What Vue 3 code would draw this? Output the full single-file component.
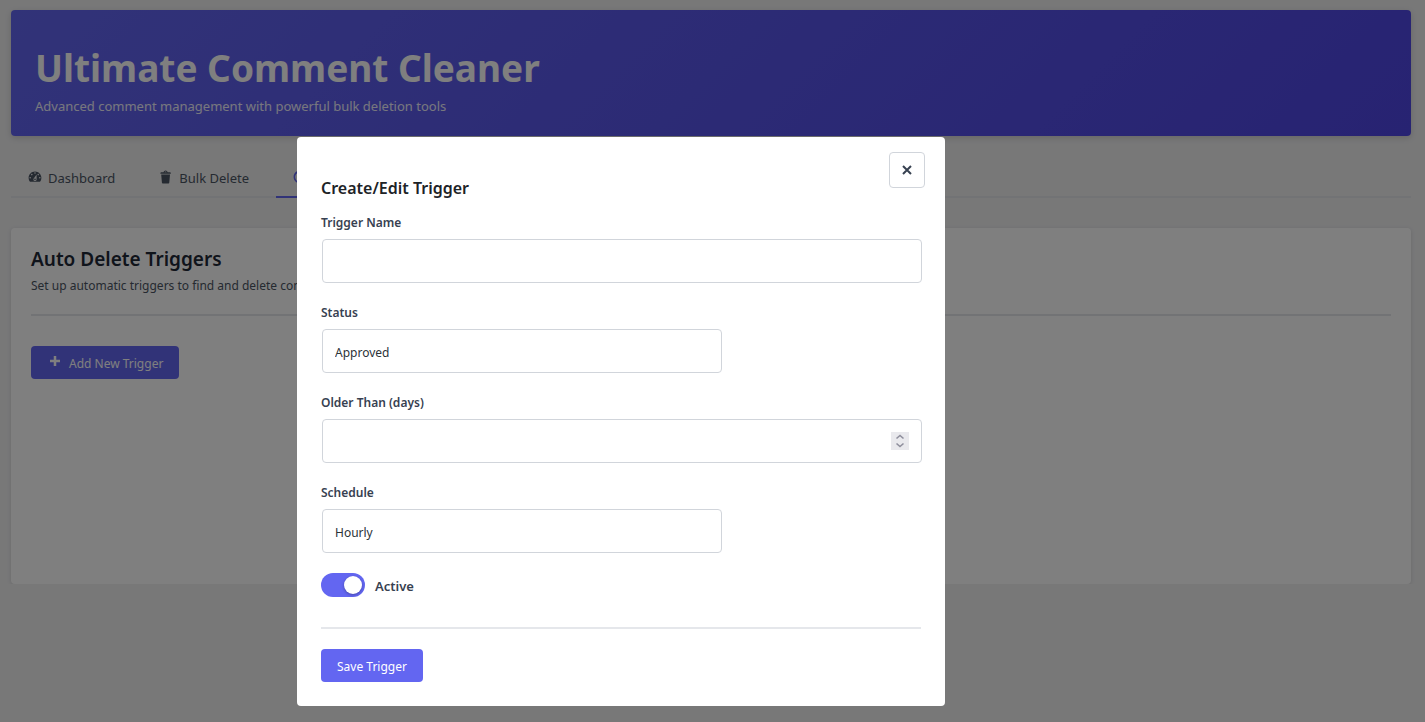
<template>
  <div class="wrap">
    <header class="page-header">
      <h1>Ultimate Comment Cleaner</h1>
      <p>Advanced comment management with powerful bulk deletion tools</p>
    </header>

    <nav class="tabs">
      <button
        v-for="tab in tabs"
        :key="tab.id"
        type="button"
        class="tab"
        :class="{ active: tab.id === activeTab }"
        :aria-label="tab.id"
        @click="activeTab = tab.id"
      >
        <svg class="icon" viewBox="0 0 20 20" aria-hidden="true"><path :d="tab.icon" /></svg>
        <span v-if="tab.label">{{ tab.label }}</span>
      </button>
    </nav>

    <section class="card">
      <div class="card-header">
        <h2>Auto Delete Triggers</h2>
        <p>Set up automatic triggers to find and delete comments</p>
      </div>
      <button type="button" class="btn btn-add" @click="showModal = true">
        <svg class="plus" viewBox="0 0 12 12" aria-hidden="true"><path d="M6 1v10M1 6h10" /></svg>
        <span>Add New Trigger</span>
      </button>
    </section>

    <div v-if="showModal" class="overlay">
      <div class="modal" role="dialog" aria-labelledby="modal-title">
        <button type="button" class="close" aria-label="Close" @click="showModal = false">
          <svg viewBox="0 0 10 10" aria-hidden="true"><path d="M1 1l8 8M9 1l-8 8" /></svg>
        </button>
        <h3 id="modal-title">Create/Edit Trigger</h3>

        <form @submit.prevent="saveTrigger">
          <div class="field">
            <label for="trigger-name">Trigger Name</label>
            <input id="trigger-name" v-model="form.name" type="text" />
          </div>
          <div class="field">
            <label for="trigger-status">Status</label>
            <select id="trigger-status" v-model="form.status">
              <option value="approved">Approved</option>
              <option value="pending">Pending</option>
              <option value="spam">Spam</option>
              <option value="trash">Trash</option>
            </select>
          </div>
          <div class="field">
            <label for="trigger-days">Older Than (days)</label>
            <div class="number">
              <input id="trigger-days" ref="daysInput" v-model="form.days" type="number" min="0" />
              <div class="stepper">
                <button type="button" aria-label="Increase" @click="step(1)">
                  <svg viewBox="0 0 18 9" aria-hidden="true"><path d="M5.5 6.5L9 3.5l3.5 3" /></svg>
                </button>
                <button type="button" aria-label="Decrease" @click="step(-1)">
                  <svg viewBox="0 0 18 9" aria-hidden="true"><path d="M5.5 2.5L9 5.5l3.5-3" /></svg>
                </button>
              </div>
            </div>
          </div>
          <div class="field">
            <label for="trigger-schedule">Schedule</label>
            <select id="trigger-schedule" v-model="form.schedule">
              <option value="hourly">Hourly</option>
              <option value="daily">Daily</option>
              <option value="weekly">Weekly</option>
            </select>
          </div>
          <div class="toggle-row">
            <input id="trigger-active" v-model="form.active" type="checkbox" class="toggle" />
            <label for="trigger-active">Active</label>
          </div>
          <div class="actions">
            <button type="submit" class="btn">Save Trigger</button>
          </div>
        </form>
      </div>
    </div>
  </div>
</template>

<script setup>
import { ref, reactive } from 'vue'

const tabs = [
  {
    id: 'dashboard',
    label: 'Dashboard',
    icon: 'M3.76 16h12.48C17.34 14.63 18 12.89 18 11c0-4.41-3.58-8-8-8s-8 3.59-8 8c0 1.89.66 3.63 1.76 5zM10 4c.55 0 1 .45 1 1s-.45 1-1 1-1-.45-1-1 .45-1 1-1zM6 6c.55 0 1 .45 1 1s-.45 1-1 1-1-.45-1-1 .45-1 1-1zm8 0c.55 0 1 .45 1 1s-.45 1-1 1-1-.45-1-1 .45-1 1-1zm-5.37 5.55L12 7v6c0 1.1-.9 2-2 2s-2-.9-2-2c0-.57.24-1.08.63-1.45zM4 10c.55 0 1 .45 1 1s-.45 1-1 1-1-.45-1-1 .45-1 1-1zm12 0c.55 0 1 .45 1 1s-.45 1-1 1-1-.45-1-1 .45-1 1-1zm-5 3c0-.55-.45-1-1-1s-1 .45-1 1 .45 1 1 1 1-.45 1-1z'
  },
  {
    id: 'bulk',
    label: 'Bulk Delete',
    icon: 'M12 4h3c.6 0 1 .4 1 1v1H3V5c0-.6.5-1 1-1h3c.2-1.1 1.3-2 2.5-2s2.3.9 2.5 2zM8 4h3c-.2-.6-.9-1-1.5-1S8.2 3.4 8 4zM4 7h11l-.9 10.1c0 .5-.5.9-1 .9H5.9c-.5 0-.9-.4-1-.9L4 7z'
  },
  {
    id: 'triggers',
    label: '',
    icon: 'M10 2c4.42 0 8 3.58 8 8s-3.58 8-8 8-8-3.58-8-8 3.58-8 8-8zm0 14c3.31 0 6-2.69 6-6s-2.69-6-6-6-6 2.69-6 6 2.69 6 6 6zm-.71-5.29c.07.05.14.1.23.15l-.02.02L14 13l-3.03-3.19L10 5l-.97 4.81h.01c0 .02-.01.05-.02.09S9 9.97 9 10c0 .28.1.52.29.71z'
  }
]

const activeTab = ref('triggers')
const showModal = ref(true)
const daysInput = ref(null)
const triggers = ref([])

const form = reactive({
  name: '',
  status: 'approved',
  days: '',
  schedule: 'hourly',
  active: true
})

function step(amount) {
  form.days = Math.max(0, Number(form.days || 0) + amount)
  daysInput.value.focus()
}

function saveTrigger() {
  triggers.value.push({ ...form })
  showModal.value = false
}
</script>

<style>
body {
  background: #f0f0f1;
}
</style>

<style scoped>
* {
  box-sizing: border-box;
}
.wrap {
  padding: 10px 14px 0 11px;
  font-family: "Segoe UI", "Noto Sans", "Open Sans", sans-serif;
  font-size: 13px;
  color: #3c434a;
}
h1, h2, h3, p {
  margin: 0;
}
button, input, select {
  font: inherit;
}
button {
  cursor: pointer;
}
.page-header {
  padding: 32px 24px 18px;
  border-radius: 4px;
  background: linear-gradient(135deg, #6366f1, #4f46e5);
  box-shadow: 0 2px 6px rgba(0, 0, 0, 0.15);
  color: #fff;
}
.page-header h1 {
  font-size: 37px;
  line-height: 52px;
  font-weight: 700;
}
.page-header p {
  font-size: 13px;
  line-height: 24px;
  opacity: 0.9;
}
.tabs {
  display: flex;
  gap: 11px;
  margin: 22px 0 30px;
  border-bottom: 2px solid #e5e7eb;
}
.tab {
  display: flex;
  align-items: center;
  gap: 5px;
  height: 40px;
  margin-bottom: -2px;
  padding: 0 16px;
  border: 0;
  border-bottom: 2px solid transparent;
  background: none;
  color: #4b5563;
  font-size: 13px;
}
.tab span {
  padding-top: 2px;
}
.tab.active {
  border-color: #6366f1;
  color: #6366f1;
}
.icon {
  width: 16px;
  height: 16px;
  fill: currentColor;
}
.card {
  min-height: 356px;
  padding: 20px;
  border-radius: 4px;
  background: #fff;
  box-shadow: 0 1px 4px rgba(0, 0, 0, 0.12);
}
.card-header {
  padding-bottom: 18px;
  margin-bottom: 30px;
  border-bottom: 2px solid #e5e7eb;
}
.card-header h2 {
  font-size: 19px;
  line-height: 22px;
  font-weight: 600;
  color: #1f2937;
}
.card-header p {
  padding-top: 6px;
  font-size: 12px;
  line-height: 20px;
  color: #4b5563;
}
.btn {
  height: 33px;
  padding: 2px 16px 0;
  border: 0;
  border-radius: 4px;
  background: #6366f1;
  color: #fff;
  font-size: 12px;
}
.btn-add {
  display: flex;
  align-items: center;
  gap: 8px;
  padding-left: 18px;
}
.plus {
  width: 12px;
  height: 12px;
  margin-bottom: 6px;
  fill: none;
  stroke: currentColor;
  stroke-width: 2.5;
}
.overlay {
  position: fixed;
  inset: 0;
  display: flex;
  justify-content: center;
  align-items: flex-start;
  padding: 137px 183px 0 0;
  overflow: auto;
  background: rgba(0, 0, 0, 0.5);
}
.modal {
  position: relative;
  width: 100%;
  max-width: 648px;
  padding: 39px 24px 24px;
  border-radius: 4px;
  background: #fff;
}
.close {
  position: absolute;
  top: 15px;
  right: 20px;
  display: flex;
  align-items: center;
  justify-content: center;
  width: 36px;
  height: 36px;
  padding: 0;
  border: 1px solid #d1d5db;
  border-radius: 4px;
  background: #fff;
  color: #374151;
}
.close svg {
  width: 10px;
  height: 10px;
  fill: none;
  stroke: currentColor;
  stroke-width: 2;
}
.modal h3 {
  margin-bottom: 13px;
  font-size: 16px;
  line-height: 24px;
  font-weight: 600;
  color: #1d2327;
}
.field {
  margin-bottom: 20px;
}
.field label {
  display: block;
  margin-bottom: 6px;
  font-size: 12px;
  line-height: 20px;
  font-weight: 600;
  color: #374151;
}
.field input,
.field select {
  display: block;
  width: 100%;
  height: 44px;
  margin: 0 1px;
  padding: 2px 12px 0;
  border: 1px solid #d1d5db;
  border-radius: 4px;
  background: #fff;
  color: #2c3338;
  font-size: 12px;
  appearance: none;
}
.field select {
  max-width: 400px;
}
.number {
  position: relative;
}
.number input {
  appearance: textfield;
}
.number input::-webkit-inner-spin-button {
  display: none;
}
.stepper {
  position: absolute;
  top: 13px;
  right: 12px;
  width: 18px;
  background: #e9e9ed;
}
.stepper button {
  display: block;
  width: 18px;
  height: 9px;
  padding: 0;
  border: 0;
  background: none;
  color: #8f8f9d;
}
.stepper svg {
  display: block;
  fill: none;
  stroke: currentColor;
  stroke-width: 1.6;
}
.toggle-row {
  display: flex;
  align-items: center;
  gap: 10px;
  margin-bottom: 30px;
}
.toggle-row label {
  padding-top: 2px;
  font-size: 13px;
  line-height: 22px;
  font-weight: 600;
  color: #374151;
}
.toggle {
  width: 44px;
  height: 24px;
  margin: 0;
  padding: 3px;
  border-radius: 12px;
  background: #d1d5db;
  appearance: none;
  cursor: pointer;
}
.toggle::before {
  content: "";
  display: block;
  width: 18px;
  height: 18px;
  border-radius: 50%;
  background: #fff;
  box-shadow: 0 1px 3px rgba(0, 0, 0, 0.3);
}
.toggle:checked {
  background: #6366f1;
}
.toggle:checked::before {
  margin-left: 20px;
}
.actions {
  padding-top: 20px;
  border-top: 2px solid #e5e7eb;
}
.actions .btn {
  display: block;
}
</style>
